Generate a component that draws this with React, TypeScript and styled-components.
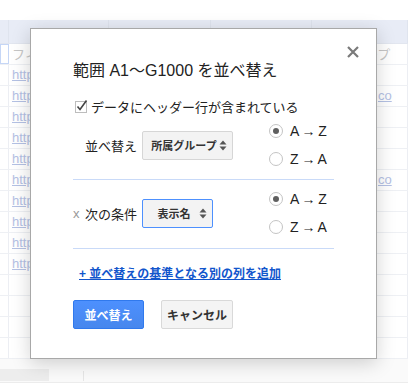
import React, { useState } from 'react';
import styled, { createGlobalStyle } from 'styled-components';

const GlobalStyle = createGlobalStyle`
  html, body {
    margin: 0;
    padding: 0;
    background: #ffffff;
    overflow: hidden;
  }
  body {
    font-family: "Liberation Sans", Arial, "Noto Sans CJK JP", sans-serif;
  }
`;

const Page = styled.div`
  position: relative;
  width: 408px;
  height: 390px;
  overflow: hidden;
  background: #fff;
`;

const Sheet = styled.div`
  display: flex;
  flex-direction: column;
  padding-top: 20px;
`;

const HeaderRow = styled.div`
  display: flex;
  height: 24px;
  background: #e8ecf6;
  border-bottom: 1px solid #e2e6ef;
  box-sizing: border-box;
`;

const Row = styled.div`
  display: flex;
  height: 21px;
  border-bottom: 1px solid #eef0f4;
  box-sizing: border-box;
`;

const Cell = styled.div<{ $w: number; $selected?: boolean; $pad?: number }>`
  width: ${(p) => p.$w}px;
  flex: none;
  box-sizing: border-box;
  border-right: 1px solid #eceef3;
  border: ${(p) => (p.$selected ? '1px solid #c5d6f6' : undefined)};
  padding: 0 0 0 ${(p) => p.$pad ?? 3}px;
  font-size: 13px;
  line-height: 20px;
  white-space: nowrap;
  overflow: hidden;
`;

const HeadCell = styled(Cell)`
  border-right: 1px solid #dfe4ee;
`;

const FadedLink = styled.span`
  color: #b4c1e4;
  text-decoration: underline;
`;

const FadedText = styled.span`
  color: #c6c6c6;
  font-family: "Noto Sans CJK JP", sans-serif;
  font-size: 13px;
`;

const Footer = styled.div`
  height: 22px;
  background: #fafafa;
  display: flex;
  align-items: flex-end;
  padding-bottom: 1px;
  border-bottom: 1px solid #ececec;
`;

const FooterTab = styled.div`
  width: 49px;
  height: 12px;
  background: #ededed;
`;

const FooterBox = styled.div`
  margin-left: 34px;
  height: 10px;
  flex: 1;
  border-left: 1px solid #e6e6e6;
`;

const Dialog = styled.div`
  position: absolute;
  left: 30px;
  top: 28px;
  width: 347px;
  box-sizing: border-box;
  background: #fff;
  border: 1px solid #a8a8a8;
  box-shadow: 0 4px 18px rgba(0, 0, 0, 0.18);
  padding: 32px 42px 29px 42px;
  font-family: "Liberation Sans", Arial, "Noto Sans CJK JP", sans-serif;
  color: #222;
`;

const Close = styled.button`
  position: absolute;
  top: 16px;
  right: 16px;
  width: 14px;
  height: 14px;
  padding: 0;
  border: none;
  background: none;
  cursor: pointer;
  display: flex;
`;

const Title = styled.h2`
  margin: 0;
  font-size: 16px;
  font-weight: normal;
  line-height: 20px;
  color: #222;
`;

const CheckRow = styled.label`
  display: flex;
  align-items: center;
  gap: 3px;
  margin-top: 16px;
  height: 18px;
  font-size: 13px;
  margin-left: 1px;
  cursor: pointer;
`;

const SortRow = styled.div<{ $top: number }>`
  display: flex;
  align-items: center;
  margin-top: ${(p) => p.$top}px;
`;

const LabelArea = styled.div`
  width: 64px;
  flex: none;
  display: flex;
  align-items: center;
  justify-content: flex-end;
  font-size: 13px;
  white-space: nowrap;
  margin-right: 5px;
`;

const RemoveX = styled.span`
  color: #999;
  font-size: 13px;
  margin-right: auto;
`;

const SelectBox = styled.div<{ $w: number; $focused?: boolean }>`
  width: ${(p) => p.$w}px;
  height: 29px;
  box-sizing: border-box;
  display: flex;
  align-items: center;
  background: #f3f3f3;
  border: 1px solid ${(p) => (p.$focused ? '#4d90fe' : '#d6d6d6')};
  border-radius: 2px;
  padding: 0 5px 0 6px;
  font-size: 11px;
  font-weight: bold;
  color: #333;
`;

const SelectText = styled.span`
  flex: 1;
  text-align: center;
  font-family: "Noto Sans CJK JP", sans-serif;
`;

const RadioGroup = styled.div`
  margin-left: auto;
  width: 65px;
  display: flex;
  flex-direction: column;
`;

const RadioRow = styled.label`
  display: flex;
  align-items: center;
  height: 28px;
  gap: 7px;
  font-size: 14px;
  word-spacing: -1px;
  color: #222;
  cursor: pointer;
`;

const RadioDot = styled.span<{ $on: boolean }>`
  width: 14px;
  height: 14px;
  box-sizing: border-box;
  border-radius: 50%;
  border: 1px solid #c4c4c4;
  background: #fff;
  display: flex;
  align-items: center;
  justify-content: center;
  &::after {
    content: '';
    width: 6px;
    height: 6px;
    border-radius: 50%;
    background: #5f5f5f;
    display: ${(p) => (p.$on ? 'block' : 'none')};
  }
`;

const Divider = styled.div<{ $top: number }>`
  height: 1px;
  background: #c9daf8;
  margin-top: ${(p) => p.$top}px;
`;

const AddLink = styled.a`
  display: block;
  margin-top: 16px;
  margin-left: 6px;
  font-size: 12px;
  line-height: 18px;
  font-weight: bold;
  color: #1155cc;
  text-decoration: underline;
  font-family: "Liberation Sans", Arial, "Noto Sans CJK JP", sans-serif;
  cursor: pointer;
`;

const Buttons = styled.div`
  display: flex;
  gap: 17px;
  margin-top: 17px;
`;

const Button = styled.button<{ $primary?: boolean }>`
  width: ${(p) => (p.$primary ? 71 : 72)}px;
  height: 29px;
  box-sizing: border-box;
  border-radius: 2px;
  border: 1px solid ${(p) => (p.$primary ? '#3079ed' : '#d9d9d9')};
  background: ${(p) => (p.$primary ? 'linear-gradient(#4d90fe, #4787ed)' : '#f4f4f4')};
  color: ${(p) => (p.$primary ? '#fff' : '#333')};
  font-family: "Noto Sans CJK JP", sans-serif;
  font-size: 12px;
  font-weight: bold;
  padding: 0;
  cursor: pointer;
`;

const colWidths = [9, 100, 102, 101, 96];

const ArrowIcon = () => (
  <svg width="8" height="11" viewBox="0 0 8 11">
    <path d="M4 0.5 L7.5 4.5 L0.5 4.5 Z" fill="#555" />
    <path d="M4 10.5 L7.5 6.5 L0.5 6.5 Z" fill="#555" />
  </svg>
);

const CheckIcon = () => (
  <svg width="14" height="14" viewBox="0 0 14 14">
    <rect x="1.5" y="2.5" width="11" height="11" fill="#fff" stroke="#bdbdbd" />
    <path d="M3.5 7.5 L6 10.5 L12.5 1.5" fill="none" stroke="#444" strokeWidth="1.6" />
  </svg>
);

const Radio: React.FC<{ on: boolean; label: string; onPick: () => void }> = ({ on, label, onPick }) => (
  <RadioRow onClick={onPick}>
    <RadioDot $on={on} />
    {label}
  </RadioRow>
);

const App: React.FC = () => {
  const [order1, setOrder1] = useState<'az' | 'za'>('az');
  const [order2, setOrder2] = useState<'az' | 'za'>('az');

  const rows = Array.from({ length: 15 }, (_, i) => i);

  return (
    <Page>
      <GlobalStyle />
      <Sheet>
        <HeaderRow>
          {colWidths.map((w, i) => (
            <HeadCell key={i} $w={w} />
          ))}
        </HeaderRow>
        {rows.map((r) => (
          <Row key={r}>
            {colWidths.map((w, c) => {
              let content: React.ReactNode = null;
              let pad = 3;
              if (r === 0 && c === 1) content = <FadedText>フィ</FadedText>;
              if (r === 0 && c === 4) {
                content = <FadedText>所属グループ</FadedText>;
                pad = 1;
              }
              if (r >= 1 && r <= 10 && c === 1) content = <FadedLink>http</FadedLink>;
              if ((r === 2 || r === 6) && c === 4) {
                content = <FadedLink>co</FadedLink>;
                pad = 66;
              }
              return (
                <Cell key={c} $w={w} $pad={pad} $selected={r === 0 && c === 0}>
                  {content}
                </Cell>
              );
            })}
          </Row>
        ))}
        <Footer>
          <FooterTab />
          <FooterBox />
        </Footer>
      </Sheet>

      <Dialog>
        <Close aria-label="閉じる">
          <svg width="14" height="14" viewBox="0 0 14 14">
            <path d="M2 2 L12 12 M12 2 L2 12" stroke="#7a7a7a" strokeWidth="2.2" />
          </svg>
        </Close>
        <Title>範囲 A1〜G1000 を並べ替え</Title>
        <CheckRow>
          <CheckIcon />
          <span>データにヘッダー行が含まれている</span>
        </CheckRow>

        <SortRow $top={2}>
          <LabelArea>
            <span>並べ替え</span>
          </LabelArea>
          <SelectBox $w={91}>
            <SelectText>所属グループ</SelectText>
            <ArrowIcon />
          </SelectBox>
          <RadioGroup>
            <Radio on={order1 === 'az'} label="A → Z" onPick={() => setOrder1('az')} />
            <Radio on={order1 === 'za'} label="Z → A" onPick={() => setOrder1('za')} />
          </RadioGroup>
        </SortRow>
        <Divider $top={6} />

        <SortRow $top={5}>
          <LabelArea>
            <RemoveX>x</RemoveX>
            <span>次の条件</span>
          </LabelArea>
          <SelectBox $w={71} $focused>
            <SelectText>表示名</SelectText>
            <ArrowIcon />
          </SelectBox>
          <RadioGroup>
            <Radio on={order2 === 'az'} label="A → Z" onPick={() => setOrder2('az')} />
            <Radio on={order2 === 'za'} label="Z → A" onPick={() => setOrder2('za')} />
          </RadioGroup>
        </SortRow>
        <Divider $top={7} />

        <AddLink>+ 並べ替えの基準となる別の列を追加</AddLink>

        <Buttons>
          <Button $primary>並べ替え</Button>
          <Button>キャンセル</Button>
        </Buttons>
      </Dialog>
    </Page>
  );
};

export default App;
